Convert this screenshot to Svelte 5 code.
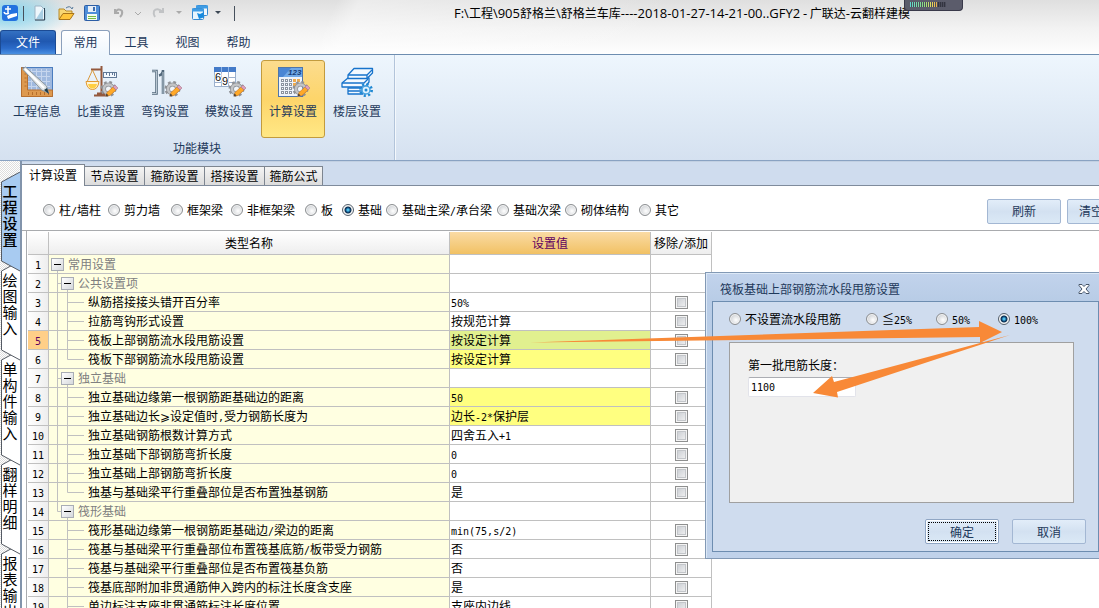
<script lang="ts">
	type Row = { text: string; level: number; value?: string; mark?: boolean; last?: boolean };

	const menus = ['工具', '视图', '帮助'];
	const tools = ['工程信息', '比重设置', '弯钩设置', '模数设置', '计算设置', '楼层设置'];
	const sideTabs = ['工程设置', '绘图输入', '单构件输入', '翻样明细', '报表输出'];
	const pageTabs = ['计算设置', '节点设置', '箍筋设置', '搭接设置', '箍筋公式'];
	const kinds = [
		'柱/墙柱',
		'剪力墙',
		'框架梁',
		'非框架梁',
		'板',
		'基础',
		'基础主梁/承台梁',
		'基础次梁',
		'砌体结构',
		'其它'
	];
	const modes = ['不设置流水段甩筋', '≦25%', '50%', '100%'];
	const title = 'F:\\工程\\905舒格兰\\舒格兰车库----2018-01-27-14-21-00..GFY2 - 广联达-云翻样建模';

	const rows: Row[] = [
		{ text: '常用设置', level: 0 },
		{ text: '公共设置项', level: 1 },
		{ text: '纵筋搭接接头错开百分率', level: 2, value: '50%' },
		{ text: '拉筋弯钩形式设置', level: 2, value: '按规范计算' },
		{ text: '筏板上部钢筋流水段甩筋设置', level: 2, value: '按设定计算', mark: true },
		{ text: '筏板下部钢筋流水段甩筋设置', level: 2, value: '按设定计算', mark: true, last: true },
		{ text: '独立基础', level: 1 },
		{ text: '独立基础边缘第一根钢筋距基础边的距离', level: 2, value: '50', mark: true },
		{ text: '独立基础边长⩾设定值时,受力钢筋长度为', level: 2, value: '边长-2*保护层', mark: true },
		{ text: '独立基础钢筋根数计算方式', level: 2, value: '四舍五入+1' },
		{ text: '独立基础下部钢筋弯折长度', level: 2, value: '0' },
		{ text: '独立基础上部钢筋弯折长度', level: 2, value: '0' },
		{ text: '独基与基础梁平行重叠部位是否布置独基钢筋', level: 2, value: '是', last: true },
		{ text: '筏形基础', level: 1, last: true },
		{ text: '筏形基础边缘第一根钢筋距基础边/梁边的距离', level: 2, value: 'min(75,s/2)' },
		{ text: '筏基与基础梁平行重叠部位布置筏基底筋/板带受力钢筋', level: 2, value: '否' },
		{ text: '筏基与基础梁平行重叠部位是否布置筏基负筋', level: 2, value: '否' },
		{ text: '筏基底部附加非贯通筋伸入跨内的标注长度含支座', level: 2, value: '是' },
		{ text: '单边标注支座非贯通筋标注长度位置', level: 2, value: '支座内边线' }
	];

	const trunkEnd = rows.findIndex((r) => r.level === 1 && r.last);

	let kind = $state('基础');
	let mode = $state('100%');
	let length = $state('1100');
	let current = $state(4);
	let open = $state(true);

	// odd parts are the half-width runs
	const parts = (text: string) => text.split(/([\x21-\x7e]+)/);

	function treePath(row: Row, i: number) {
		if (row.level === 0) return 'M8.5 9V19';
		let d = '';
		if (i < trunkEnd) d += 'M8.5 0V19';
		if (i === trunkEnd) d += 'M8.5 0V9.5';
		if (row.level === 1) return d + 'M8.5 9.5H12M18.5 9V19';
		return d + (row.last ? 'M18.5 0V9.5H35' : 'M18.5 0V19M18.5 9.5H35');
	}
</script>

{#snippet mixed(text: string)}{#each parts(text) as part, i}{#if i % 2}<span class="half">{part}</span>{:else}{part}{/if}{/each}{/snippet}

{#snippet gear()}
	<g transform="translate(24.5 24)">
		<circle r="6.500" fill="none" stroke="#909296" stroke-width="3" stroke-dasharray="2.600 2.500" />
		<circle r="4.500" fill="none" stroke="#8f9195" stroke-width="4" />
		<circle r="4.500" fill="none" stroke="#c3c4c6" stroke-width="2.500" />
		<circle r="2" fill="#f2f5f8" />
	</g>
	<path d="M22 31l1-3.500 6-5.500 3 3-6 5.500z" fill="#ffa928" stroke="#c9731c" stroke-width=".6" />
	<path d="M29 22l2-2 3 3-2 2z" fill="#dda0b8" stroke="#a87890" stroke-width=".6" />
	<path d="M22 31l.5-2.500 2 2z" fill="#333" />
{/snippet}

<div class="app">
	<header>
		<div class="titlebar">
			<div class="quick">
				<svg width="80" height="26" viewBox="0 0 80 26" aria-hidden="true">
					<rect x="2" y="5" width="16" height="16" rx="3" fill="#2372df" />
					<path d="M5 9h6M8 6v8M4 12q1 3 5 1" fill="none" stroke="#fff" stroke-width="1.500" />
					<path d="M7 16l4-2 6-1v3l-9 3z" fill="#fff" />
					<path d="M23.500 6v15" stroke="#46505c" />
					<path d="M35 6h6l4 4v10H35z" fill="#eef7fc" stroke="#9db4c4" />
					<path d="M44.500 8v12H35" fill="none" stroke="#2f4658" />
					<path d="M36 19l7-11v11z" fill="#a9cfe4" />
					<path d="M59 19V9h5l2 2h6v3" fill="#f7d774" stroke="#b98a2a" />
					<path d="M59 19.500l4-6h11l-4 6z" fill="#ffc63c" stroke="#a8741a" />
					<path d="M66 8q4-3 6 1l1-2" fill="none" stroke="#54779a" />
				</svg>
				<svg width="160" height="26" viewBox="80 0 160 26" aria-hidden="true">
					<rect x="84.500" y="5.500" width="15" height="15" rx="1" fill="#4f8ed8" stroke="#2c5da5" />
					<path d="M88 6h8v6h-8z" fill="#e8eef6" />
					<path d="M93 7h2v4h-2z" fill="#3c6cae" />
					<path d="M87 14h10v6H87z" fill="#f5faef" />
					<path d="M88 16.500h8M88 18.500h8" stroke="#74bb42" />
					<path d="M115 9v4h4M115 13q3-6 7-2 1 3-2 6" fill="none" stroke="#aaa" stroke-width="2" />
					<path d="M135 12l3 3 3-3" fill="none" stroke="#aaa" />
					<path d="M163 8v4h-4M163 12q-6-5-9-1-1 3 1 6" fill="none" stroke="#c1c3c5" stroke-width="2" />
					<path d="M176 11h6l-3 3z" fill="#aaa" />
					<rect x="196.500" y="5.500" width="11" height="10" rx="1" fill="#f1f8fd" stroke="#3588d0" />
					<path d="M196 7h12" stroke="#3e9ce4" stroke-width="3" />
					<rect x="192.500" y="8.500" width="11" height="11" rx="1" fill="#e8f5fd" stroke="#3588d0" />
					<path d="M192 10h12" stroke="#3e9ce4" stroke-width="3" />
					<path d="M197 13l3 1 4-2-1 4 2 1-6 2z" fill="#168be0" />
					<path d="M215 11h6l-3 3z" fill="#3d4854" />
					<path d="M234.500 6v15" stroke="#46505c" />
				</svg>
			</div>
			<span class="title">
				{#each parts(title) as part, i}{#if i % 2}<span class="latin">{part}</span>{:else}{part}{/if}{/each}
			</span>
			<div class="meter" aria-hidden="true"><i></i></div>
		</div>
		<nav>
			<button class="file">文件</button>
			<button class="menu active">常用</button>
			{#each menus as name}
				<button class="menu">{name}</button>
			{/each}
		</nav>
	</header>

	<section class="ribbon">
		<div class="group">
			<div class="tools">
				{#each tools as name, i}
					<button class="tool" class:on={i === 4}>
						<svg width="34" height="34" viewBox="0 0 34 34" aria-hidden="true">
							{#if i === 0}
								<rect x="1.500" y="2.500" width="31" height="29" fill="#9fb9df" stroke="#4a7dbf" />
								<path d="M8 6.500H30M8 11.500H30M8 16.500H30M8 21.500H30M11.500 4V25M16.500 4V25M21.500 4V25M26.500 4V25" stroke="#c6d6ee" />
								<path d="M1.500 2.500l6 2v20.500h25v6.500h-31z" fill="#dd994f" stroke="#b8702f" />
								<path d="M8.500 27v3M12.500 27v3M16.500 27v3M20.500 27v3M24.500 27v3M28.500 27v3M4.500 9h2M4.500 13h2M4.500 17h2M4.500 21h2" stroke="#b56e2d" />
								<path d="M2.500 4l3-2 21 19 2 7-7-3z" fill="#dfe4e6" stroke="#8b959b" />
								<path d="M5 4l19 19" stroke="#fff" stroke-width="2" />
								<path d="M24 25l3-2 2 6z" fill="#1d3b4b" />
							{:else if i === 1}
								<path d="M7 4.500h11M17.500 1v29M10 30.500h14M13 28.500h8" fill="none" stroke="#94593d" stroke-width="2" />
								<path d="M8.500 5L3 17M8.500 5L14 17" fill="none" stroke="#d9983c" />
								<path d="M2 16.500h13q-1 8-6.500 8T2 16.500z" fill="#fff4d2" stroke="#e39a30" />
								<path d="M4 19h9q-1 4.500-4.500 4.500T4 19z" fill="#ffcf42" />
								<rect x="19.500" y="7.500" width="13" height="5" fill="#f4f9ff" stroke="#617998" />
								<path d="M22.500 8v2M25.500 8v3M28.500 8v2M30.500 8v3" stroke="#617998" />
								{@render gear()}
							{:else if i === 2}
								<path d="M4 6h4.500v22.500H4M11 10.500q4-1 4-5.500v24" fill="none" stroke="#52687b" stroke-width="2.500" />
								<path d="M4 6h4.500v22.500H4M15 7v22" fill="none" stroke="#b9c7d2" />
								{@render gear()}
							{:else if i === 3}
								<path d="M2.500 2.500h21v19h-21z" fill="#fff" stroke="#9bb0cd" />
								<path d="M2 2h22v5H2z" fill="#447bc9" />
								<path d="M2 12.500h22M2 17.500h22M9.500 7v14M16.500 7v14" stroke="#9bb0cd" />
								<path d="M9.500 2v5M16.500 2v5" stroke="#8db4e8" />
								<text x="3" y="16" font-family="Liberation Sans" font-size="11" fill="#111" stroke="#fff" stroke-width="2" paint-order="stroke">6</text>
								<text x="10" y="20" font-family="Liberation Sans" font-size="11" fill="#111" stroke="#fff" stroke-width="2" paint-order="stroke">9</text>
								{@render gear()}
							{:else if i === 4}
								<rect x="2.500" y="2.500" width="24" height="29" fill="#eef3fa" stroke="#5076aa" />
								<path d="M3 3h23v9H3z" fill="#72aae8" />
								<path d="M3 3h12L7 12H3z" fill="#4a86d4" />
								<text x="12" y="10" font-family="Liberation Sans" font-size="8" font-style="italic" font-weight="bold" fill="#163d79">123</text>
								<path d="M5 15.500h12M5 19.500h12M5 23.500h12M5 27.500h12" stroke="#8a93a0" stroke-width="3" stroke-dasharray="3 1" />
								<path d="M6 15.500h12M6 19.500h12M6 23.500h12M6 27.500h12" stroke="#fff" stroke-dasharray="1 3" />
								<path d="M17 15.500h8M17 19.500h8" stroke="#edaa4e" stroke-width="3" stroke-dasharray="3 1" />
								{@render gear()}
							{:else}
								<g fill="#f3f9ff" stroke="#1773cb" stroke-width="1.300" stroke-linejoin="round">
									<path d="M8 23h15v6H8zM8 26h15" />
									<path d="M8 13l-6 5v4h23l4-5v-4z" />
									<path d="M2 18h22l4-4" fill="none" />
									<path d="M14 3.500h18.500V8L27 13.500H8V10z" />
									<path d="M8 10h19l5-5M27 10v3" fill="none" />
								</g>
								<g transform="translate(26 25)">
									<circle r="5.500" fill="none" stroke="#2189d2" stroke-width="3" stroke-dasharray="2 2.300" />
									<circle r="4" fill="#dff2ff" stroke="#4aa3e0" stroke-width="1.500" />
									<circle r="1.500" fill="#2189d2" />
								</g>
							{/if}
						</svg>
						<span>{name}</span>
					</button>
				{/each}
			</div>
			<div class="caption">功能模块</div>
		</div>
	</section>

	<main>
		<aside>
			{#each sideTabs as name, i}
				{@const h = name.length * 16 + 25}
				<button class="side" class:on={i === 0} style="z-index: {9 - i}">
					<svg width="21" height={h + 12} aria-hidden="true">
						<path d="M20 0L1.500 10V{h}L20 {h + 10}" />
					</svg>
					<span>{name}</span>
				</button>
			{/each}
		</aside>

		<div class="page">
			<div class="tabs">
				{#each pageTabs as name, i}
					<button class:on={i === 0}>{name}</button>
				{/each}
			</div>

			<div class="filter">
				<div class="kinds">
					{#each kinds as name}
						<label><input type="radio" name="kind" value={name} bind:group={kind} /><span>{@render mixed(name)}</span></label>
					{/each}
				</div>
				<div class="actions">
					<button class="btn">刷新</button>
					<button class="btn clear">清空</button>
				</div>
			</div>

			<div class="grid">
				<table>
					<colgroup>
						<col class="c-no" /><col class="c-name" /><col class="c-value" /><col class="c-check" />
					</colgroup>
					<thead>
						<tr>
							<th></th>
							<th>类型名称</th>
							<th class="sel">设置值</th>
							<th>{@render mixed('移除/添加')}</th>
						</tr>
					</thead>
					<tbody>
						{#each rows as row, i}
							<tr class:current={i === current} onclick={() => (current = i)}>
								<td class="no">{@render mixed(String(i + 1))}</td>
								<td class="name">
									<div class="tree level{row.level}">
										<svg width="38" height="19" aria-hidden="true"><path d={treePath(row, i)} /></svg>
										{#if row.level < 2}
											<button class="toggle" aria-label="折叠 {row.text}"></button>
										{/if}
										<span>{@render mixed(row.text)}</span>
									</div>
								</td>
								<td class="value" class:mark={row.mark}>{@render mixed(row.value ?? '')}</td>
								<td class="check">
									{#if row.level === 2}
										<input type="checkbox" aria-label={row.text} />
									{/if}
								</td>
							</tr>
						{/each}
					</tbody>
				</table>
			</div>
		</div>
	</main>

	{#if open}
		<div class="dialog" role="dialog" aria-labelledby="dialog-title">
			<div class="dialog-head">
				<span id="dialog-title">筏板基础上部钢筋流水段甩筋设置</span>
				<button class="close" aria-label="关闭" onclick={() => (open = false)}>
					<svg width="12" height="10" viewBox="0 0 12 10">
						<path d="M1 .5h3l2 2 2-2h3v1L8 5l3 3.500v1H8l-2-2-2 2H1v-1L4 5 1 1.500z" fill="#fff" stroke="#465468" />
					</svg>
				</button>
			</div>
			<div class="dialog-body">
				<div class="modes">
					{#each modes as name}
						<label><input type="radio" name="mode" value={name} bind:group={mode} /><span>{@render mixed(name)}</span></label>
					{/each}
				</div>
				<div class="box">
					<label for="length">第一批甩筋长度：</label>
					<input id="length" type="text" bind:value={length} />
				</div>
				<div class="dialog-foot">
					<button class="btn default" onclick={() => (open = false)}><span>确定</span></button>
					<button class="btn" onclick={() => (open = false)}>取消</button>
				</div>
			</div>
		</div>
	{/if}

	<svg class="arrows" width="1099" height="608" viewBox="0 0 1099 608" aria-hidden="true">
		<path d="M530 342.500L979 327V321L1002 332L980 343V337L700 340.500z" />
		<path d="M1010 335L834 382L832 376L813 393L838 397.500L837 392L940 358z" />
	</svg>
</div>

<style>
	:global(body) {
		margin: 0;
	}

	.app {
		position: relative;
		height: 100vh;
		overflow: hidden;
		display: flex;
		flex-direction: column;
		font: 12px/18px 'Noto Sans CJK SC', sans-serif;
		color: #000;
		background: #fff;
	}

	button,
	input {
		font: inherit;
		color: inherit;
		margin: 0;
		padding: 0;
		border: 0;
		border-radius: 0;
		box-sizing: border-box;
		background: none;
	}

	.half {
		font-family: 'DejaVu Sans Mono', monospace;
		font-size: 10px;
		line-height: 1;
	}

	header {
		background:
			radial-gradient(ellipse 60px 26px at 10px 14px, rgba(104, 205, 238, 0.8), transparent),
			linear-gradient(115deg, transparent 30%, rgba(255, 255, 255, 0.4) 32%, transparent 60%),
			linear-gradient(#dfdfdf, #f2f2f2 28px, #fefefe);
		border-bottom: 1px solid #6d8db0;
	}

	.titlebar {
		display: flex;
		align-items: flex-start;
		height: 30px;
	}

	.quick {
		display: flex;
		flex: none;
		width: 454px;
	}

	.title {
		flex: none;
		width: 458px;
		line-height: 26px;
		white-space: nowrap;
	}

	.latin {
		font-family: 'Open Sans', sans-serif;
		font-size: 13px;
		line-height: 1;
	}

	.meter {
		width: 57px;
		height: 10px;
		margin-left: -8px;
		border: 1px solid #39394a;
		border-top: 0;
		border-radius: 0 0 4px 4px;
		background: #5b5c6b;
	}

	.meter i {
		display: block;
		width: 36px;
		height: 5px;
		margin: 2px 5px;
		background:
			repeating-linear-gradient(90deg, transparent 0 1px, #4b4c5b 1px 2px),
			linear-gradient(90deg, #5fd8d0, #8fdf80 40%, #e8dc60 60%, #e9b04c 74%, #333440 75%);
	}

	nav {
		display: flex;
		height: 24px;
		color: #1e395b;
	}

	nav button {
		height: 24px;
		padding-bottom: 1px;
	}

	.file {
		width: 56px;
		border: 1px solid #1c4b94;
		border-bottom: 0;
		border-radius: 3px 3px 0 0;
		background: linear-gradient(#3471c2, #2058b0 45%, #2b6bc9 75%, #4a90e2);
		color: #fff;
	}

	.menu {
		width: 51px;
	}

	.menu.active {
		width: 49px;
		height: 25px;
		margin: 0 1px 0 5px;
		padding-bottom: 3px;
		border: 1px solid #8ba0bc;
		border-bottom: 0;
		border-radius: 3px 3px 0 0;
		background: linear-gradient(#fff, #eef6fd);
	}

	.ribbon {
		height: 105px;
		display: flex;
		background: linear-gradient(#eef6fd, #e4eef8 40%, #d5e1f0);
		border-bottom: 1px solid #89a2c2;
		color: #1e395b;
	}

	.group {
		padding: 5px 5px 0;
		border-right: 1px solid #b2c4da;
		box-shadow: 1px 0 #f4f8fc;
	}

	.tools {
		display: flex;
	}

	.tool {
		width: 64px;
		height: 78px;
		padding-top: 4px;
		display: flex;
		flex-direction: column;
		align-items: center;
		border: 1px solid transparent;
		border-radius: 3px;
	}

	.tool span {
		margin-top: 3px;
	}

	.tool.on {
		border-color: #c29b3e;
		background: linear-gradient(#fcdc8e, #fdd56a 50%, #ffe885);
	}

	.caption {
		text-align: center;
		line-height: 20px;
	}

	main {
		flex: 1;
		min-height: 0;
		display: flex;
		background: #fff;
	}

	aside {
		width: 20px;
		flex: none;
		padding-top: 11px;
		border-right: 2px solid #8294ab;
		background: repeating-conic-gradient(#dedede 0 25%, #fff 0 50%) 0 0 / 2px 2px;
	}

	.side {
		position: relative;
		display: block;
		width: 20px;
		padding: 11px 0 14px;
		font-size: 15px;
		line-height: 16px;
	}

	.side svg {
		position: absolute;
		left: 0;
		top: 0;
		fill: #fff;
		stroke: #555b64;
	}

	.side.on svg {
		fill: #a8cbf1;
	}

	.side span {
		position: relative;
		display: block;
		width: 16px;
		margin-left: 2px;
		word-break: break-all;
	}

	.side.on span {
		font-weight: 500;
	}

	.page {
		flex: 1;
		min-width: 0;
		overflow: hidden;
		display: flex;
		flex-direction: column;
	}

	.tabs {
		height: 23px;
		flex: none;
		display: flex;
		align-items: flex-end;
		border-top: 1px solid #c2d0e2;
		border-bottom: 1px solid #7f8b9c;
		background: #cfdcee;
	}

	.tabs button {
		width: 60px;
		height: 19px;
		line-height: 18px;
		border: 1px solid #7d8590;
		border-width: 1px 1px 0 0;
		background: linear-gradient(#f4f4f4, #dcdcdc);
	}

	.tabs button:last-child {
		width: 58px;
	}

	.tabs .on {
		width: 63px;
		height: 22px;
		margin-bottom: -1px;
		padding-bottom: 1px;
		background: #fff;
	}

	.filter {
		height: 44px;
		flex: none;
		display: flex;
		justify-content: space-between;
		align-items: center;
		border-bottom: 1px solid #a9abae;
	}

	.kinds {
		display: grid;
		grid-template-columns: 65px 63px 60px 74px 37px 44px 111px 68px 74px 60px;
		margin: 4px 0 0 21px;
	}

	label {
		display: flex;
		align-items: center;
		white-space: nowrap;
	}

	input[type='radio'] {
		appearance: none;
		flex: none;
		width: 12px;
		height: 12px;
		margin-right: 4px;
		border: 1px solid #8c8f92;
		border-radius: 50%;
		background: radial-gradient(circle at 60% 60%, #fff, #c9ccd0 80%);
		box-shadow: inset 0 0 0 1px #f4f4f4;
	}

	input[type='radio']:checked {
		border-color: #55606c;
		background: radial-gradient(circle at 50% 50%, #4fc0ea 0 1px, #14588c 2px, #0b2c4c 3px, #f4f4f4 4px);
	}

	.btn {
		width: 74px;
		height: 25px;
		border: 1px solid #a3b7d3;
		border-radius: 2px;
		background: linear-gradient(#e2edf9, #d3e1f1 50%, #dbe9f6);
		color: #1e395b;
	}

	.actions {
		display: flex;
		gap: 6px;
		margin: 6px -42px 0 0;
	}

	.clear {
		padding-left: 11px;
		text-align: left;
	}

	.grid {
		flex: 1;
		min-height: 0;
		overflow: hidden;
		margin-left: 4px;
		padding: 1px;
		border-left: 1px solid #a9abae;
	}

	table {
		table-layout: fixed;
		width: 684px;
		border-spacing: 0;
	}

	.c-no {
		width: 21px;
	}

	.c-name {
		width: 401px;
	}

	.c-value {
		width: 201px;
	}

	.c-check {
		width: 61px;
	}

	th,
	td {
		height: 18px;
		padding: 0;
		border: 1px solid #c0c0c0;
		border-width: 0 1px 1px 0;
		line-height: 18px;
		white-space: nowrap;
	}

	th {
		height: 22px;
		font-weight: normal;
		background: linear-gradient(#fff, #eee);
	}

	th.sel {
		background: linear-gradient(#fadba4, #f1c164);
		color: #600060;
	}

	.no {
		text-align: center;
		background: linear-gradient(90deg, #fff, #eee);
	}

	.current .no {
		background: #ffcf88;
		color: #600060;
	}

	.name {
		background: #ffffe1;
	}

	.tree {
		position: relative;
		height: 18px;
		padding-left: 39px;
	}

	.level0 {
		padding-left: 19px;
		color: #808080;
	}

	.level1 {
		padding-left: 29px;
		color: #808080;
	}

	.tree svg {
		position: absolute;
		left: 0;
		top: 0;
		fill: none;
		stroke: #c0c0c0;
	}

	.toggle {
		position: absolute;
		left: 2px;
		top: 3px;
		width: 13px;
		height: 13px;
		border: 1px solid #a9adb5;
		background:
			linear-gradient(#000, #000) center / 7px 1px no-repeat,
			linear-gradient(135deg, #fff, #d5d8dc);
	}

	.level1 .toggle {
		left: 12px;
	}

	.value {
		padding-left: 1px;
	}

	.mark {
		background: #ffff80;
	}

	.current .mark {
		background: #e1f08f;
	}

	.check {
		text-align: center;
		line-height: 0;
	}

	input[type='checkbox'] {
		appearance: none;
		display: block;
		width: 13px;
		height: 13px;
		margin: 0 auto;
		border: 1px solid #8e8f8f;
		background: linear-gradient(135deg, #c4c8ce, #f6f6f6);
		box-shadow: inset 0 0 0 1px #f4f4f4, inset 0 0 0 2px #c3c6ca;
	}

	.dialog {
		position: absolute;
		left: 705px;
		top: 272px;
		z-index: 20;
		width: 401px;
		box-sizing: border-box;
		padding: 0 6px 6px;
		border: 1px solid #8299b5;
		background: linear-gradient(#c2d3ec, #b8cce6 28px, #c0d2ea);
		box-shadow: inset 1px 1px #dce8f6;
	}

	.dialog-head {
		display: flex;
		justify-content: space-between;
		align-items: center;
		height: 28px;
		padding: 3px 9px 0 8px;
		box-sizing: border-box;
		color: #1e395b;
	}

	.close {
		width: 12px;
		height: 10px;
		line-height: 0;
	}

	.dialog-body {
		height: 251px;
		box-sizing: border-box;
		padding: 8px 12px 0 16px;
		border: 1px solid #6d8db0;
		background: #cfdcee;
	}

	.modes {
		display: grid;
		grid-template-columns: 137px 70px 62px 60px;
	}

	.box {
		height: 161px;
		box-sizing: border-box;
		margin: 14px 12px 0 0;
		padding: 13px 18px;
		border: 1px solid #a0a0a0;
		background: #f0f0f0;
	}

	.box input {
		display: block;
		width: 108px;
		height: 20px;
		margin-top: 3px;
		padding: 0 2px;
		border: 1px solid #e2e3ea;
		border-top-color: #abadb3;
		border-radius: 2px;
		background: #fff;
		font: 10px/18px 'DejaVu Sans Mono', monospace;
	}

	.dialog-foot {
		display: flex;
		justify-content: flex-end;
		gap: 13px;
		margin-top: 16px;
	}

	.default {
		padding: 2px;
		border-color: #90a6c4;
		box-shadow: inset 0 0 0 1px #fff;
	}

	.default span {
		display: block;
		border: 1px dotted #000;
		line-height: 17px;
	}

	.arrows {
		position: absolute;
		left: 0;
		top: 0;
		z-index: 30;
		fill: #f88937;
		pointer-events: none;
	}
</style>
